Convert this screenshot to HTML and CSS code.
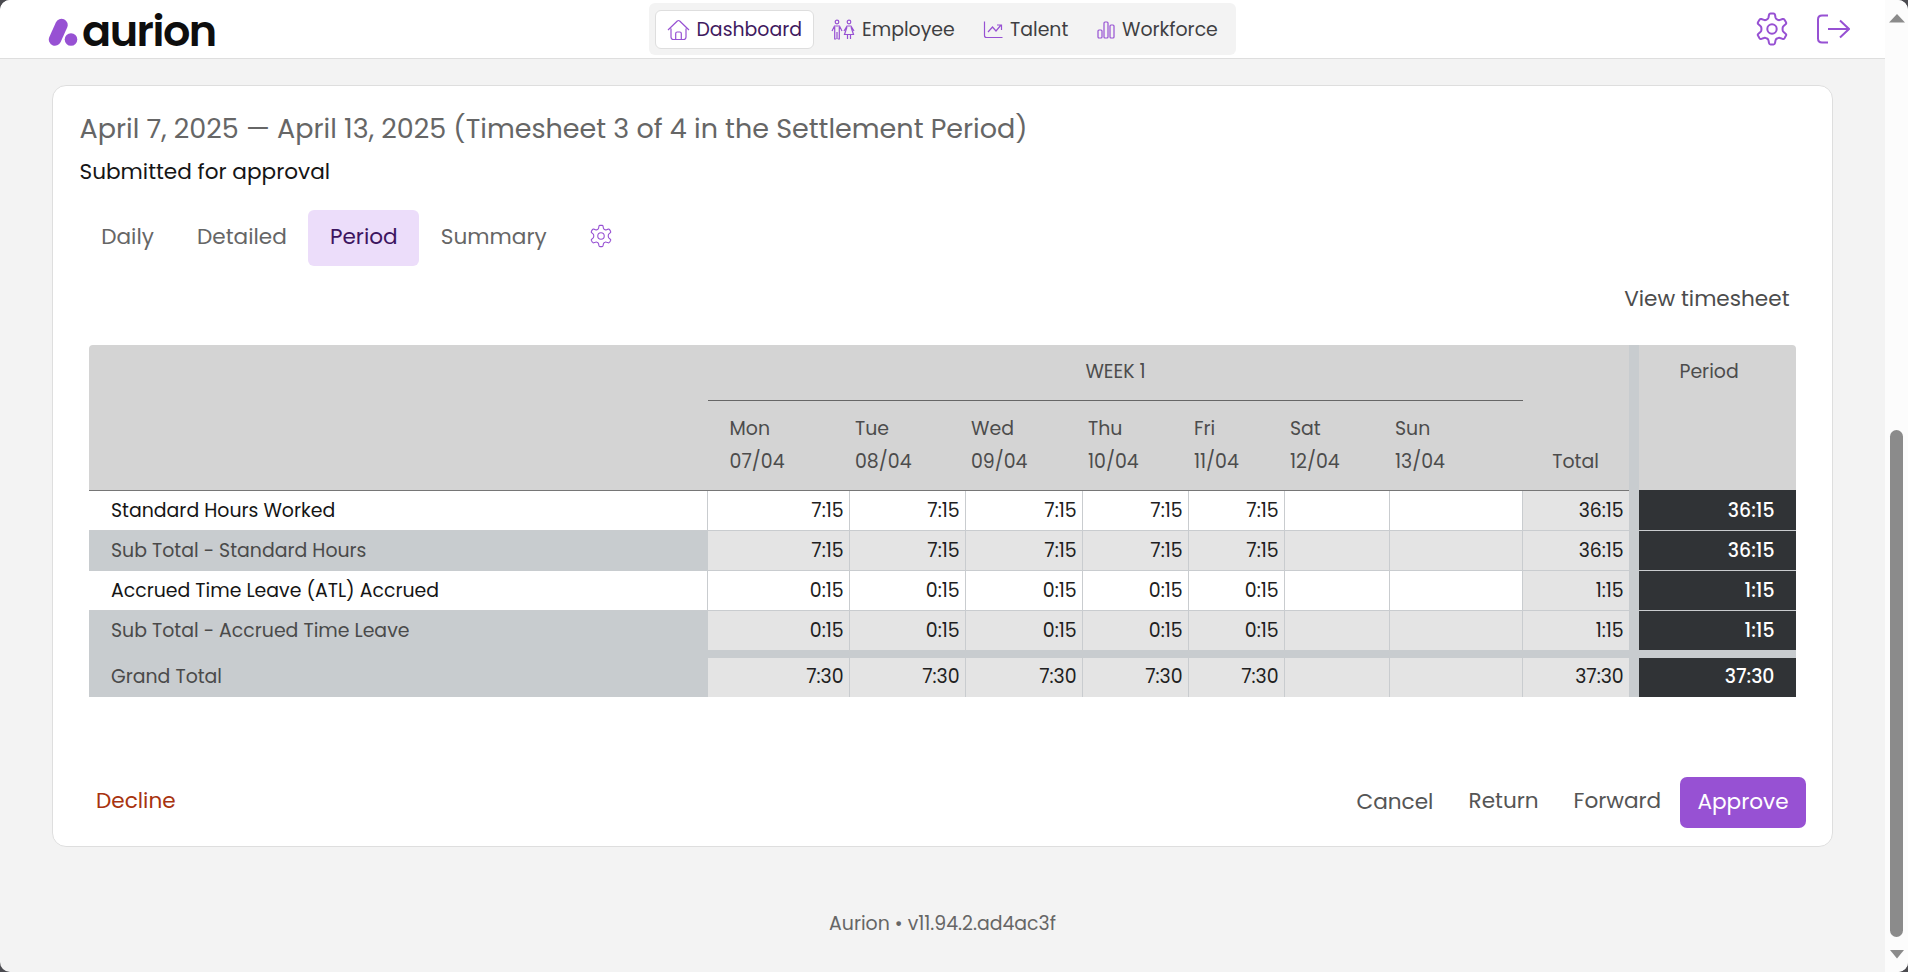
FILE: index.html
```html
<!DOCTYPE html>
<html lang="en">
<head>
<meta charset="utf-8">
<title>Aurion</title>
<link rel="stylesheet" href="styles.css">
</head>
<body>
<svg class="defs" width="0" height="0">
  <symbol id="gear" viewBox="0 0 32 34"><path d="M13 2.800Q13.300 1.500 14.500 1.500h3q1.200 0 1.500 1.300l.5 2.700q.3 1.300 1.500 1.900l.8.400q1.100.600 2.300.100l2.500-.900q1.200-.400 1.900.700l1.500 2.600q.6 1.100-.4 1.900l-2 1.700q-1 .900-1 2.100v1.900q0 1.300 1 2.100l2 1.700q1 .800.400 1.900l-1.500 2.600q-.7 1.100-1.900.700l-2.500-.900q-1.200-.500-2.300.100l-.8.400q-1.200.600-1.500 1.900l-.5 2.700q-.3 1.300-1.500 1.300h-3q-1.200 0-1.500-1.300l-.5-2.700q-.3-1.300-1.500-1.900l-.8-.400q-1.100-.600-2.300-.100l-2.500.900q-1.200.400-1.900-.700l-1.500-2.600q-.6-1.100.4-1.900l2-1.700q1-.8 1-2.100v-1.900q0-1.200-1-2.100l-2-1.700q-1-.8-.4-1.900l1.500-2.600q.7-1.100 1.900-.7l2.500.9q1.200.5 2.300-.1l.8-.4q1.200-.6 1.500-1.900z"/><circle cx="16" cy="17" r="4.700"/></symbol>
</svg>
<div class="window">
  <div class="page">
    <header class="header">
      <div class="logo">
        <svg width="30" height="29" viewBox="0 0 30 29"><path d="M7 21.500 13.500 7" stroke="#9751d3" stroke-width="12.400" stroke-linecap="round"/><circle cx="23" cy="21.500" r="6.300" fill="#9751d3"/></svg>
        <span class="wordmark">aurion</span>
      </div>
      <nav class="nav">
        <a class="nav-item active"><svg width="23" height="22" viewBox="0 0 23 22"><path d="M1 11 10.300 2q1.200-1 2.400 0L22 11M4 9.500V18q0 2.500 2.500 2.500h10Q19 20.500 19 18V9.500M8.700 20v-5.500q0-1.500 1.500-1.500h2.600q1.500 0 1.500 1.500V20"/></svg><span>Dashboard</span></a>
        <a class="nav-item employee"><svg width="24" height="22" viewBox="0 0 24 22"><circle cx="6" cy="3" r="1.800"/><circle cx="18" cy="3" r="1.800"/><path d="M1 12l2.500-5h5L11 12M3.700 8v12h1.500M8.300 8v12H6.800M6 13v7M13 12l3-5h4l3 5M16 8l-2.500 7.500h9L20 8M16.500 16v4M19.500 16v4"/></svg><span>Employee</span></a>
        <a class="nav-item talent"><svg width="21" height="22" viewBox="0 0 21 22"><path d="M1.500 2.500v14q0 2 2 2h16M5 13l4.500-5 3.500 4 5-6M14 6h4.500v5"/></svg><span>Talent</span></a>
        <a class="nav-item workforce"><svg width="18" height="22" viewBox="0 0 18 22"><rect x="1" y="11" width="4" height="8" rx="1"/><rect x="7" y="3" width="4" height="16" rx="1"/><rect x="13" y="6" width="4" height="13" rx="1"/></svg><span>Workforce</span></a>
      </nav>
      <div class="tools">
        <svg class="gear-lg" width="32" height="34"><use href="#gear"/></svg>
        <svg class="logout" width="34" height="30" viewBox="0 0 34 30"><path d="M12 1.500H6q-4 0-4 4v19q0 4 4 4h6M12 15h21M24 6.500 33 15l-9 8.500"/></svg>
      </div>
    </header>
    <main class="card">
      <h1 class="title">April 7, 2025 — April 13, 2025 (Timesheet 3 of 4 in the Settlement Period)</h1>
      <p class="status">Submitted for approval</p>
      <div class="tabs">
        <a class="tab">Daily</a>
        <a class="tab">Detailed</a>
        <a class="tab selected">Period</a>
        <a class="tab">Summary</a>
        <svg class="gear-sm" width="22" height="24"><use href="#gear"/></svg>
      </div>
      <div class="view">View timesheet</div>
      <table class="sheet">
        <colgroup><col class="c-label"><col class="c-mon"><col class="c-tue"><col class="c-wed"><col class="c-thu"><col class="c-fri"><col class="c-sat"><col class="c-sun"><col class="c-total"><col class="c-gap"><col class="c-period"></colgroup>
        <thead>
          <tr class="head-week"><th></th><th class="week" colspan="7">WEEK 1</th><th></th><th class="gap"></th><th class="period-head">Period</th></tr>
          <tr class="head-days"><th></th><th class="first">Mon<br>07/04</th><th>Tue<br>08/04</th><th>Wed<br>09/04</th><th>Thu<br>10/04</th><th>Fri<br>11/04</th><th>Sat<br>12/04</th><th>Sun<br>13/04</th><th class="total-head">Total</th><th class="gap"></th><th class="period-foot"></th></tr>
        </thead>
        <tbody>
          <tr><td class="name">Standard Hours Worked</td><td>7:15</td><td>7:15</td><td>7:15</td><td>7:15</td><td>7:15</td><td></td><td></td><td class="total">36:15</td><td class="gap"></td><td class="period">36:15</td></tr>
          <tr class="sub"><td class="name">Sub Total - Standard Hours</td><td>7:15</td><td>7:15</td><td>7:15</td><td>7:15</td><td>7:15</td><td></td><td></td><td class="total">36:15</td><td class="gap"></td><td class="period">36:15</td></tr>
          <tr><td class="name">Accrued Time Leave (ATL) Accrued</td><td>0:15</td><td>0:15</td><td>0:15</td><td>0:15</td><td>0:15</td><td></td><td></td><td class="total">1:15</td><td class="gap"></td><td class="period">1:15</td></tr>
          <tr class="sub last"><td class="name">Sub Total - Accrued Time Leave</td><td>0:15</td><td>0:15</td><td>0:15</td><td>0:15</td><td>0:15</td><td></td><td></td><td class="total">1:15</td><td class="gap"></td><td class="period">1:15</td></tr>
          <tr class="sub grand"><td class="name">Grand Total</td><td>7:30</td><td>7:30</td><td>7:30</td><td>7:30</td><td>7:30</td><td></td><td></td><td class="total">37:30</td><td class="gap"></td><td class="period">37:30</td></tr>
        </tbody>
      </table>
      <div class="actions">
        <a class="decline">Decline</a>
        <a class="cancel">Cancel</a>
        <a class="return">Return</a>
        <a class="forward">Forward</a>
        <a class="approve">Approve</a>
      </div>
    </main>
    <footer class="footer">Aurion • v11.94.2.ad4ac3f</footer>
  </div>
  <div class="scrollbar">
    <svg width="16" height="9" viewBox="0 0 16 9"><path d="M0 8.500 8 0l8 8.500z"/></svg>
    <div class="thumb"></div>
    <svg width="14" height="9" viewBox="0 0 14 9"><path d="M0 0h14L7 8.500z"/></svg>
  </div>
</div>
</body>
</html>
```
FILE: styles.css
```css
* { box-sizing: border-box; }
body { margin: 0; background: #4b4b50; font-family: Poppins, Inter, sans-serif; font-size: 18.900px; color: #4c4c4c; }
svg { display: block; fill: none; stroke: #9751d3; stroke-width: 1.200; flex: none; }
.defs { position: absolute; }
.window { display: flex; width: 1908px; height: 972px; border-radius: 10px; overflow: hidden; background: #f3f3f3; }
.page { width: 1885px; display: flex; flex-direction: column; }
.header { display: flex; height: 59px; background: #fff; border-bottom: 1px solid #dedede; padding-left: 48px; }
.logo { display: flex; width: 601px; padding-top: 18px; }
.logo svg { stroke: none; }
.wordmark { font-size: 43px; font-weight: 600; line-height: 44px; color: #0e0e0e; margin: -9px 0 0 4px; letter-spacing: -1.500px; }
.nav { display: flex; width: 587px; height: 52px; margin-top: 3px; padding: 7px 6px; background: #f3f3f3; border-radius: 6px; }
.nav-item { display: flex; height: 39px; align-items: center; color: #3f3f42; white-space: nowrap; }
.nav-item span { margin-left: 7px; }
.nav-item.active { width: 159px; padding-left: 11px; background: #fff; border: 1px solid #dedede; border-radius: 6px; color: #3f1a60; }
.nav-item.active span { margin-left: 6.500px; }
.employee { width: 153px; padding-left: 17px; }
.talent { width: 113px; padding-left: 16px; }
.nav-item.talent span { margin-left: 6px; }
.workforce { padding-left: 17px; }
.tools { display: flex; margin-left: auto; width: 129px; padding-top: 12px; gap: 28px; }
.tools svg { stroke-width: 2; }
.logout { margin-top: 2px; }
.card { width: 1781px; height: 762px; margin: 26px 0 0 52px; border: 1px solid #dedede; border-radius: 14px; background: #fff; padding: 0 26px 0 27px; }
.title { margin: 27px 0 0 -0.500px; height: 32px; font-size: 27px; line-height: 32px; font-weight: 400; color: #666; white-space: nowrap; }
.status { margin: 13px 0 0 -0.500px; font-size: 21.600px; line-height: 28px; color: #151515; }
.tabs { display: flex; margin: 24px 0 0 -0.400px; height: 56px; font-size: 21.600px; color: #666; line-height: 53px; }
.tab { padding: 0 21.600px; white-space: nowrap; }
.tab.selected { background: #ecddfa; color: #3c1460; border-radius: 6px; }
.gear-sm { margin: 14px 0 0 21.600px; stroke-width: 1.600; }
.view { text-align: right; padding-right: 16.500px; margin-top: 17px; font-size: 21.600px; line-height: 32px; }
.sheet { width: 1707px; margin: 30px 0 0 9px; table-layout: fixed; border-collapse: separate; border-spacing: 0; }
.c-label { width: 619px; } .c-mon { width: 142px; } .c-tue { width: 116px; } .c-wed { width: 117px; } .c-thu { width: 106px; } .c-fri { width: 96px; } .c-sat { width: 105px; } .c-sun { width: 133px; } .c-total { width: 106px; } .c-gap { width: 10px; } .c-period { width: 157px; }
th { padding: 0 0 0 5px; font-weight: 400; background: #d4d4d4; text-align: left; vertical-align: top; white-space: nowrap; }
.head-week th { height: 56px; padding: 15px 0 0; line-height: 24px; }
.head-week .week { border-bottom: 1px solid #666; text-align: center; }
.head-week .period-head { text-align: center; padding-right: 17px; border-top-right-radius: 4px; }
.head-week th:first-child { border-top-left-radius: 4px; }
.head-days th { height: 90px; padding-top: 11px; line-height: 33px; border-bottom: 1px solid #767676; }
.head-days .first { padding-left: 21.600px; }
.head-days .total-head { text-align: center; padding: 44px 1px 0 0; }
.head-days .period-foot { border-bottom-color: #303336; }
td { height: 40px; padding: 0 5.400px 0 0; border-right: 1px solid #c9cccf; border-bottom: 1px solid #c9cccf; text-align: right; color: #202020; background: #fff; line-height: 24px; }
td.name { text-align: left; padding-left: 22px; color: #151515; }
.sub td { background: #e4e4e4; }
.sub td.name { background: #c8cccf; color: #4a4a4a; border-color: #c8cccf; }
td.total, .sub td.total { background: #e4e4e4; border-right: 0; }
.sheet .gap, .sheet .sub .gap { background: #c8cccf; border: 0; padding: 0; }
.sheet .period, .sheet .sub .period { background: #303336; color: #fff; border-right: 0; padding-right: 21.600px; font-weight: 500; }
.last td { height: 47px; border-bottom: 8px solid #c8cccf; }
.grand td { height: 39px; border-bottom: 0; padding-bottom: 1px; }
.actions { display: flex; margin-top: 80px; font-size: 21.600px; line-height: 51px; color: #555; }
.decline { width: 1260px; padding-left: 16px; color: #a8330f; margin-top: -2px; }
.cancel { width: 112px; padding-left: 16.500px; margin-top: -1px; }
.return { width: 105px; padding-left: 16.500px; margin-top: -2px; }
.forward { width: 123px; padding-left: 16.500px; margin-top: -2px; }
.approve { width: 126px; height: 51px; line-height: 50px; text-align: center; color: #fff; background: #9751d3; border-radius: 7px; }
.footer { margin-top: 64px; text-align: center; line-height: 26px; color: #666; }
.scrollbar { width: 23px; background: #fcfcfc; display: flex; flex-direction: column; align-items: center; padding-top: 14px; }
.scrollbar svg { stroke: none; fill: #8b8b8b; }
.thumb { width: 13px; height: 507px; margin: 407px 0 13px; border-radius: 7px; background: #8b8b8b; }
```
